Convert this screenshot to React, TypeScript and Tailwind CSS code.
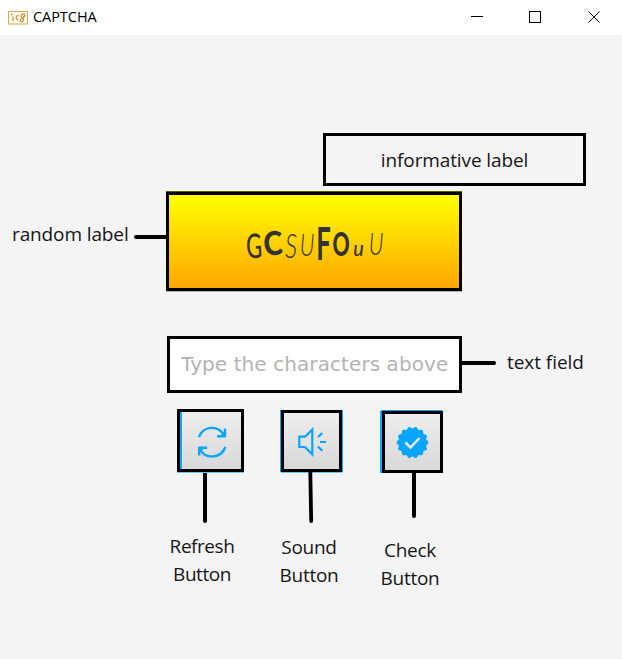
import React from "react";

const captchaLetters = [
  { char: "G", className: "w-[16px] text-[34px] font-medium scale-x-[0.64] rotate-[-3deg] translate-y-[2px]" },
  { char: "C", className: "w-[22px] text-[33px] font-black scale-x-[0.88] rotate-[-4deg] -translate-y-[1px]" },
  { char: "S", className: "w-[14px] text-[33px] font-light italic scale-x-[0.74] translate-y-[2px]" },
  { char: "U", className: "w-[18px] text-[32px] font-light italic scale-x-[0.68]" },
  { char: "F", className: "w-[15px] text-[46px] font-bold scale-x-[0.56] translate-y-[4px]" },
  { char: "O", className: "w-[20px] text-[32px] font-black scale-x-[0.66]" },
  { char: "u", className: "w-[15px] text-[22px] font-medium italic scale-x-[0.9]" },
  { char: "U", className: "w-[20px] text-[32px] font-light italic scale-x-[0.68] -translate-y-[1px]" },
];

function TitleBar() {
  return (
    <header className="flex h-[35px] items-center bg-white pl-2">
      <svg width="20" height="14" viewBox="0 0 20 14" fill="none">
        <rect x="0.5" y="0.5" width="19" height="12.5" fill="#fffaf0" stroke="#d6aa55" />
        <path d="M3 4l1.5-1M5 5.5v4.5M10.5 4.5C8 4 7 9.5 10.5 9M17 3c-4-1-5 3-2.5 4 2.500 1.500 0 4.500-2 3.500-1.500-1.500 2-3 5-6.500" stroke="#c98b2c" strokeWidth="1.2" />
      </svg>
      <span className="ml-[5px] mt-[-2px] w-[100px] text-[14.5px] leading-[20px] tracking-[-0.05px] text-black">CAPTCHA</span>
      <svg className="ml-auto" width="160" height="13" viewBox="0 0 160 13" fill="none" stroke="black">
        <path d="M9 5.500h12" />
        <rect x="67.500" y="0.500" width="11" height="11" />
        <path d="M126.500 0.500l11 11M137.500 0.500l-11 11" />
      </svg>
    </header>
  );
}

function RefreshIcon() {
  return (
    <svg className="mt-[3px] ml-[3px]" width="30" height="32" viewBox="0 0 30 32" fill="none" stroke="#08a5ff" strokeWidth="2.4">
      <path d="M2 11.200C6 -0.500 21 -1 26.500 8.500M28 2.500v7.800h-8M28.400 21C24 32.500 9 33.500 3.500 24M2.200 29.500v-7.800h8" />
      <path d="M28 5v5h-5zM2.200 27v-5h5z" fill="#08a5ff" stroke="none" />
    </svg>
  );
}

function SoundIcon() {
  return (
    <svg width="31" height="32" viewBox="0 0 31 32" fill="none" stroke="#08a5ff" strokeWidth="2.2">
      <path d="M3.300 11.700H9l7.300-7.200v25L9 22H3.300zM22 12l4.300-4M24 17h6M22 21.500l4.300 4.200" />
    </svg>
  );
}

function CheckIcon() {
  const points = Array.from({ length: 112 }, (_, i) => {
    const angle = (i / 112) * Math.PI * 2;
    const radius = 15 + Math.cos((angle + Math.PI / 2) * 14 + Math.PI);
    return `${16.5 + Math.cos(angle) * radius},${16.5 + Math.sin(angle) * radius}`;
  }).join(" ");
  return (
    <svg className="shrink-0" width="33" height="33" viewBox="0 0 33 33" fill="none">
      <polygon points={points} fill="#08a5ff" />
      <path d="M9.500 16.500l5 5 9-9.500" stroke="#eeeeee" strokeWidth="2.500" />
    </svg>
  );
}

export default function App() {
  return (
    <div className="h-[659px] w-[622px] overflow-hidden bg-[#f4f4f4] font-['Open_Sans','Noto_Sans',sans-serif] text-[19px] leading-[28px] text-[#161616]">
      <TitleBar />
      <main className="pt-[98px]">
        <div className="ml-[323px] flex h-[53px] w-[263px] items-center justify-center border-[3px] border-black">
          <span className="whitespace-nowrap pt-px tracking-[-0.12px]">informative label</span>
        </div>
        <section className="mt-[5px] flex h-[101px] items-center">
          <span className="ml-3 w-[122px] whitespace-nowrap pb-[15px] tracking-[-0.12px]">random label</span>
          <div className="mb-[9px] h-1 w-8 rounded-l-full bg-black" />
          <div className="h-[101px] w-[296px] border-y border-t-[#556000] border-b-[#bcb3a1]">
            <div className="flex h-[99px] items-center justify-center border-[3px] border-black bg-linear-to-b from-[#ffff00] to-[#ffa500]">
              <div className="ml-[3px] flex h-[44px] w-[140px] items-baseline font-['Lato'] leading-[38px] text-[#333333]">
                {captchaLetters.map(({ char, className }, i) => (
                  <span key={i} className={`inline-flex shrink-0 justify-center ${className}`}>{char}</span>
                ))}
              </div>
            </div>
          </div>
        </section>
        <section className="mt-[44px] ml-[167px] flex h-[57px] items-center">
          <input
            aria-label="CAPTCHA characters"
            placeholder="Type the characters above"
            className="h-[57px] w-[295px] border-[3px] border-black bg-white pb-px pl-[11px] font-['DejaVu_Sans',sans-serif] text-[20px] tracking-[0.08px] outline-none placeholder:text-[#b3b3b3] placeholder:opacity-100"
          />
          <div className="mt-[-3px] h-1 w-[34px] rounded-r-full bg-black" />
          <span className="ml-[11px] whitespace-nowrap pb-[6px] tracking-[-0.05px]">text field</span>
        </section>
        <section className="flex items-start pt-4">
          <div className="ml-[163px] flex w-[84px] flex-col items-center">
            <button className="ml-[11px] flex h-[63px] w-[67px] items-center justify-center border-[3px] border-black bg-linear-to-b from-[#eeeeee] to-[#d8d8d8] shadow-[inset_2px_0_#0aa8ff,0_1px_#65c6f7]"><RefreshIcon /></button>
            <div className="mt-px h-[50px] w-1 rounded-b-full bg-black" />
            <div className="mt-[9px] mr-[6px] text-center tracking-[-0.45px]">Refresh<br />Button</div>
          </div>
          <div className="ml-[22px] mt-px flex w-[84px] flex-col items-center">
            <button className="ml-px flex h-[62px] w-[61px] items-center justify-center border-[3px] border-black bg-linear-to-b from-[#eeeeee] to-[#d8d8d8] shadow-[-1px_0_#0aa8ff,1px_0_#0aa8ff,0_1px_#65c6f7]"><SoundIcon /></button>
            <svg width="6" height="51" viewBox="0 0 6 51"><path d="M2.300 0L3.200 49" stroke="black" strokeWidth="3.800" strokeLinecap="round" /></svg>
            <div className="mt-[10px] mr-[4px] text-center tracking-[-0.3px]">Sound<br />Button</div>
          </div>
          <div className="ml-[18px] mt-[2px] flex w-[84px] flex-col items-center">
            <button className="ml-[-1px] flex h-[62px] w-[61px] items-center justify-center border-[3px] border-black bg-linear-to-b from-[#eeeeee] to-[#d8d8d8] shadow-[-1px_-1px_#0aa8ff,-2px_0_#0aa8ff]"><CheckIcon /></button>
            <div className="ml-[2px] h-[45px] w-1 rounded-b-full bg-black" />
            <div className="mt-[18px] mr-[6px] text-center tracking-[-0.3px]">Check<br />Button</div>
          </div>
        </section>
      </main>
    </div>
  );
}
